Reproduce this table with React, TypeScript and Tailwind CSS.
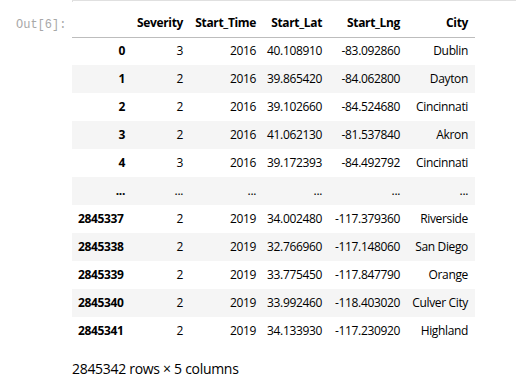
import React from "react";

const cols = [
  { name: "", w: 60 },
  { name: "Severity", w: 58 },
  { name: "Start_Time", w: 73 },
  { name: "Start_Lat", w: 66 },
  { name: "Start_Lng", w: 78 },
  { name: "City", w: 68 },
];

const rows: string[][] = [
  ["0", "3", "2016", "40.108910", "-83.092860", "Dublin"],
  ["1", "2", "2016", "39.865420", "-84.062800", "Dayton"],
  ["2", "2", "2016", "39.102660", "-84.524680", "Cincinnati"],
  ["3", "2", "2016", "41.062130", "-81.537840", "Akron"],
  ["4", "3", "2016", "39.172393", "-84.492792", "Cincinnati"],
  ["...", "...", "...", "...", "...", "..."],
  ["2845337", "2", "2019", "34.002480", "-117.379360", "Riverside"],
  ["2845338", "2", "2019", "32.766960", "-117.148060", "San Diego"],
  ["2845339", "2", "2019", "33.775450", "-117.847790", "Orange"],
  ["2845340", "2", "2019", "33.992460", "-118.403020", "Culver City"],
  ["2845341", "2", "2019", "34.133930", "-117.230920", "Highland"],
];

export default function App() {
  return (
    <div
      className="w-[516px] h-[390px] bg-white text-black overflow-hidden"
      style={{ fontFamily: '"Segoe UI", "Open Sans", "Noto Sans", sans-serif' }}
    >
      <div className="ml-[72px] h-[2px] border-t border-l border-[#e0e0e0]" />
      <div className="flex">
        <div
          className="w-[72px] shrink-0 pl-[16px] pt-[15px] text-[12px] leading-[16px] text-[#a8a8a8]"
          style={{ fontFamily: '"Liberation Mono", "DejaVu Sans Mono", monospace' }}
        >
          Out[6]:
        </div>
        <div className="flex flex-col pt-[7px]">
          <table className="border-collapse text-[12px] tracking-[-0.35px] table-fixed w-[403px]">
            <colgroup>
              {cols.map((c, i) => (
                <col key={i} style={{ width: c.w }} />
              ))}
            </colgroup>
            <thead>
              <tr className="border-b border-[#bdbdbd]">
                {cols.map((c, i) => (
                  <th
                    key={i}
                    className="h-[28px] p-0 pr-[7px] text-right font-bold whitespace-nowrap"
                  >
                    {c.name}
                  </th>
                ))}
              </tr>
            </thead>
            <tbody>
              {rows.map((r, ri) => (
                <tr key={ri} className={ri % 2 === 1 ? "bg-[#f5f5f5]" : "bg-white"}>
                  {r.map((v, ci) =>
                    ci === 0 ? (
                      <th
                        key={ci}
                        className={
                          "h-[28px] p-0 font-bold whitespace-nowrap " +
                          (v.length > 3 ? "text-left pl-[6px]" : "text-right pr-[7px]")
                        }
                      >
                        {v}
                      </th>
                    ) : (
                      <td
                        key={ci}
                        className="h-[28px] p-0 pr-[7px] text-right font-normal whitespace-nowrap"
                      >
                        {v}
                      </td>
                    )
                  )}
                </tr>
              ))}
            </tbody>
          </table>
          <div className="mt-[14px] text-[14px] leading-[20px] tracking-[-0.3px]">
            2845342 rows × 5 columns
          </div>
        </div>
      </div>
    </div>
  );
}
